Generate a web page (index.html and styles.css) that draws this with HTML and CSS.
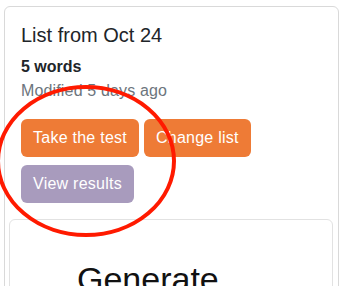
FILE: index.html
```html
<!DOCTYPE html>
<html>
<head>
<meta charset="utf-8">
<link rel="stylesheet" href="styles.css">
</head>
<body>
<div class="page">
  <div class="card">
    <div class="card-body">
      <h5 class="card-title">List from Oct 24</h5>
      <div class="count">5 words</div>
      <p class="meta">Modified 5 days ago</p>
      <div class="actions">
        <button class="btn btn-orange">Take the test</button>
        <button class="btn btn-orange">Change list</button>
        <button class="btn btn-purple">View results</button>
      </div>
    </div>
    <div class="inner-card">
      <div class="gen">Generate</div>
    </div>
  </div>
  <svg class="annot" width="200" height="170" viewBox="0 0 200 170">
    <ellipse cx="99" cy="81" rx="88" ry="74" fill="none" stroke="#ff1a00" stroke-width="4"/>
  </svg>
</div>
</body>
</html>
```
FILE: styles.css
```css
html, body { margin: 0; padding: 0; background: #fff; }
body {
  font-family: "Liberation Sans", Arial, sans-serif;
  color: #212529;
  overflow: hidden;
}
.page {
  position: relative;
  padding: 6px 8px 0 4px;
  height: 286px;
  box-sizing: border-box;
}
.card {
  border: 1px solid #d9d9d9;
  border-radius: 6px;
  height: 400px;
}
.card-body {
  padding: 16px 16px 0 16px;
}
.card-title {
  margin: 0 0 8px 0;
  font-size: 20px;
  font-weight: 500;
  line-height: 24px;
  color: #212529;
}
.count {
  font-size: 16px;
  font-weight: bold;
  line-height: 24px;
}
.meta {
  margin: 0 0 16px 0;
  font-size: 16px;
  line-height: 24px;
  color: #6c757d;
  letter-spacing: 0.15px;
}
.actions {
  display: flex;
  flex-wrap: wrap;
  column-gap: 5px;
  row-gap: 8px;
  margin-bottom: 16px;
}
.btn {
  font-family: "Liberation Sans", Arial, sans-serif;
  font-size: 16px;
  line-height: 24px;
  letter-spacing: 0.25px;
  padding: 7px 12px;
  border: 0;
  border-radius: 6px;
  color: #fff;
  cursor: pointer;
}
.btn-orange { background: #ee7b36; }
.btn-purple { background: #a89bbd; }
.inner-card {
  margin: 0 5px 0 4px;
  border: 1px solid #e2e2e2;
  border-radius: 6px;
  height: 200px;
  padding: 39px 0 0 67px;
  box-sizing: border-box;
}
.gen {
  font-family: "Liberation Sans", Arial, sans-serif;
  font-size: 34px;
  color: #111;
  line-height: 40px;
}
.annot {
  position: absolute;
  left: -13px;
  top: 80px;
  pointer-events: none;
}
```
